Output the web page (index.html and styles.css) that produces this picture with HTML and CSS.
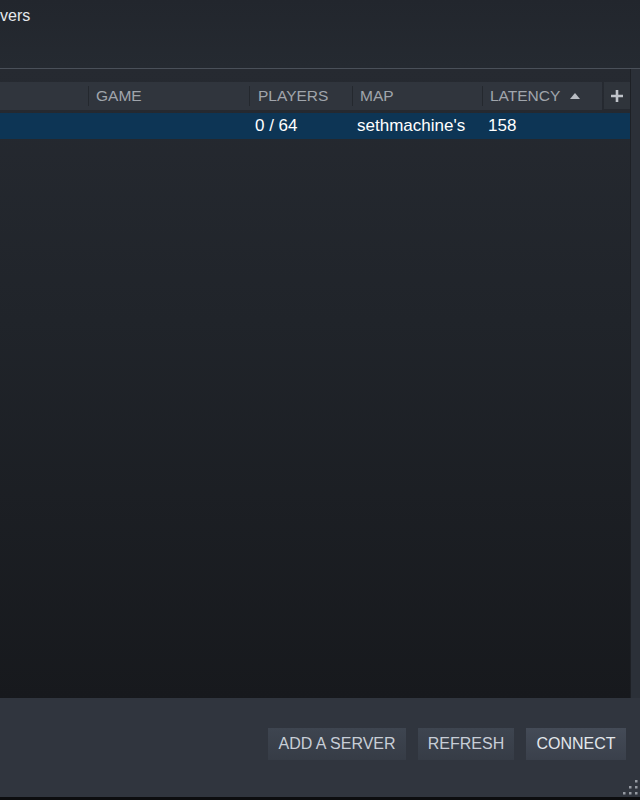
FILE: index.html
```html
<!DOCTYPE html>
<html>
<head>
<meta charset="utf-8">
<link rel="stylesheet" href="styles.css">
</head>
<body>
<div class="window">
  <header class="titlebar">
    <div class="title">vers</div>
  </header>
  <div class="divider"></div>
  <div class="content">
    <div class="table">
      <div class="thead">
        <div class="hcells">
          <div class="hcell c-name"></div>
          <div class="sep"></div>
          <div class="hcell c-game">GAME</div>
          <div class="sep"></div>
          <div class="hcell c-players">PLAYERS</div>
          <div class="sep"></div>
          <div class="hcell c-map">MAP</div>
          <div class="sep"></div>
          <div class="hcell c-latency">LATENCY <span class="sort-up"></span></div>
        </div>
        <div class="add-col">
          <svg width="14" height="14" viewBox="0 0 14 14"><path d="M7 1v12M1 7h12" stroke="#bfc3c9" stroke-width="2.6"/></svg>
        </div>
      </div>
      <div class="row selected">
        <div class="cell r-lead"></div>
        <div class="cell r-players">0 / 64</div>
        <div class="cell r-map">sethmachine's</div>
        <div class="cell r-latency">158</div>
      </div>
    </div>
    <div class="gutter"></div>
  </div>
  <footer class="footer">
    <button class="btn btn-add">ADD A SERVER</button>
    <button class="btn btn-refresh">REFRESH</button>
    <button class="btn btn-connect">CONNECT</button>
  </footer>
  <div class="bottom-edge"></div>
  <svg class="grip" width="16" height="16" viewBox="0 0 16 16">
    <g fill="#959aa2">
      <rect x="12" y="1" width="2.5" height="2.5"/>
      <rect x="6" y="7" width="2.5" height="2.5"/>
      <rect x="12" y="7" width="2.5" height="2.5"/>
      <rect x="0" y="13" width="2.5" height="2.5"/>
      <rect x="6" y="13" width="2.5" height="2.5"/>
      <rect x="12" y="13" width="2.5" height="2.5"/>
    </g>
  </svg>
</div>
</body>
</html>
```

FILE: styles.css
```css
* { box-sizing: border-box; }
html, body {
  margin: 0;
  padding: 0;
}
body {
  width: 640px;
  height: 800px;
  overflow: hidden;
  background: #2b3038;
  font-family: "Liberation Sans", Arial, Helvetica, sans-serif;
}
.window {
  position: relative;
  width: 640px;
  height: 800px;
  display: flex;
  flex-direction: column;
}
.titlebar {
  height: 68px;
  background: linear-gradient(#22262d, #252a31);
  overflow: hidden;
}
.title {
  margin-left: 0;
  padding-top: 6px;
  font-size: 16px;
  line-height: 20px;
  color: #e6e9ed;
  white-space: nowrap;
}
.divider {
  height: 1px;
  background: #4a5059;
}
.content {
  display: flex;
  height: 629px;
}
.table {
  width: 631px;
  padding-top: 13px;
  background: linear-gradient(#262a31 0%, #20242a 40%, #17191d 100%);
  border-right: 1px solid #1d2025;
}
.gutter {
  flex: 1;
  background: #2b3038;
}
.thead {
  display: flex;
  height: 28px;
  width: 630px;
  gap: 2px;
}
.hcells {
  display: flex;
  align-items: center;
  width: 602px;
  height: 28px;
  background: #30353d;
}
.hcell {
  font-size: 15.5px;
  line-height: 28px;
  color: #a0a5ac;
  padding-left: 7px;
  white-space: nowrap;
  display: flex;
  align-items: center;
}
.sep {
  width: 1px;
  height: 20px;
  background: #24282e;
}
.c-name { width: 88px; }
.c-game { width: 160px; }
.c-players { width: 102px; padding-left: 8px; }
.c-map { width: 129px; }
.c-latency { flex: 1; }
.sort-up {
  display: inline-block;
  width: 0;
  height: 0;
  margin-left: 10px;
  margin-top: -1px;
  border-left: 5px solid transparent;
  border-right: 5px solid transparent;
  border-bottom: 6px solid #b9bdc3;
}
.add-col {
  width: 26px;
  height: 27px;
  background: #2f343b;
  display: flex;
  align-items: center;
  justify-content: center;
}
.row {
  display: flex;
  width: 630px;
  height: 26px;
  margin-top: 3px;
}
.row.selected {
  background: #0d3555;
}
.cell {
  font-size: 17px;
  line-height: 26px;
  color: #ffffff;
  white-space: nowrap;
}
.r-lead { width: 255px; }
.r-players { width: 102px; }
.r-map { width: 131px; }
.r-latency { flex: 1; }
.footer {
  height: 99px;
  background: #30353e;
  display: flex;
  justify-content: flex-end;
  align-items: flex-start;
  gap: 12px;
  padding-top: 30px;
  padding-right: 14px;
}
.btn {
  height: 32px;
  border: none;
  padding: 0;
  margin: 0;
  font-family: "Liberation Sans", Arial, Helvetica, sans-serif;
  font-size: 16px;
  color: #c8ced7;
  background: linear-gradient(#3e4550, #363c46);
  text-align: center;
  line-height: 32px;
}
.btn-add { width: 138px; }
.btn-refresh { width: 96px; }
.btn-connect {
  width: 100px;
  color: #e3e7ec;
  background: linear-gradient(#444b57, #3a404b);
}
.bottom-edge {
  height: 3px;
  background: #0c0d0f;
}
.grip {
  position: absolute;
  right: 1px;
  bottom: 5px;
}
```
